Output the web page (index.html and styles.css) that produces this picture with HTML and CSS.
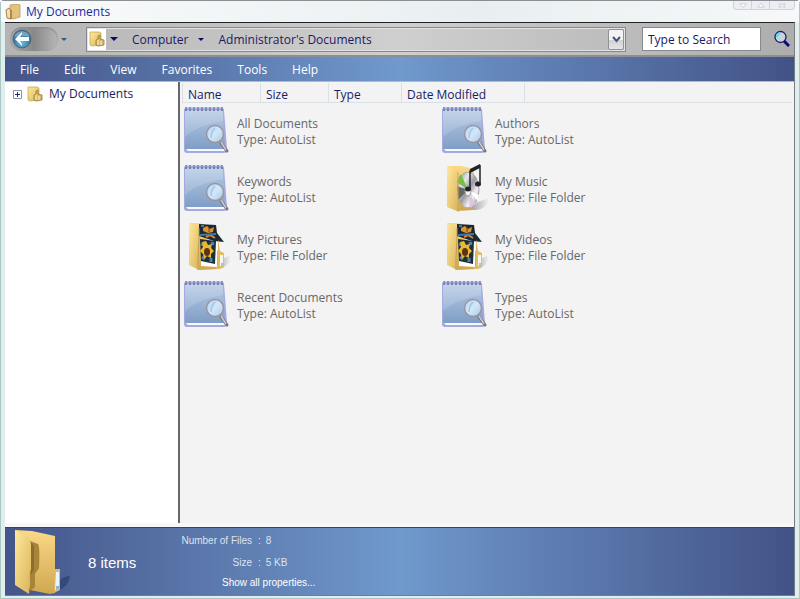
FILE: index.html
```html
<!DOCTYPE html>
<html lang="en">
<head>
  <meta charset="UTF-8">
  <meta name="viewport" content="width=device-width, initial-scale=1.0">
  <title>My Documents</title>
  <link rel="stylesheet" href="styles.css">
</head>
<body>
  <svg class="sprite" aria-hidden="true">
    <defs>
      <linearGradient id="gold" x1="0" y1="0" x2="1" y2="1">
        <stop offset="0" stop-color="#ffe99c"/>
        <stop offset="1" stop-color="#d9b45c"/>
      </linearGradient>
      <linearGradient id="gold-dark" x1="0" y1="0" x2="0" y2="1">
        <stop offset="0" stop-color="#fcd986"/>
        <stop offset="1" stop-color="#cfa750"/>
      </linearGradient>
      <linearGradient id="paper" x1="0" y1="0" x2="0" y2="1">
        <stop offset="0" stop-color="#b9cde6"/>
        <stop offset="0.5" stop-color="#9bb4d5"/>
        <stop offset="1" stop-color="#7f9dc6"/>
      </linearGradient>
      <linearGradient id="lens" x1="0" y1="0" x2="1" y2="1">
        <stop offset="0" stop-color="#b5d3ef"/>
        <stop offset="0.5" stop-color="#d3e6f8"/>
        <stop offset="1" stop-color="#a9c9ea"/>
      </linearGradient>
      <linearGradient id="shade" x1="0" y1="0" x2="1" y2="0">
        <stop offset="0" stop-color="#555" stop-opacity="0.6"/>
        <stop offset="1" stop-color="#555" stop-opacity="0"/>
      </linearGradient>
      <linearGradient id="disc" x1="0" y1="0" x2="1" y2="1">
        <stop offset="0" stop-color="#777"/>
        <stop offset="0.3" stop-color="#e8e8e8"/>
        <stop offset="0.5" stop-color="#9a9a9a"/>
        <stop offset="0.7" stop-color="#f4eef6"/>
        <stop offset="1" stop-color="#8c8c8c"/>
      </linearGradient>
      <radialGradient id="orb" cx="0.5" cy="0.7" r="0.6">
        <stop offset="0" stop-color="#6fb9d8"/>
        <stop offset="1" stop-color="#2c6590"/>
      </radialGradient>
    </defs>

    <symbol id="notebook" viewBox="0 0 48 48">
      <path d="M2 4q0-2 2-2h36q2 0 2 2l3 39q0 4-3 4H5q-3 0-3-3z" fill="#a4a9e2"/>
      <path d="M4 43h38l1 2H6z" fill="#f6f8fd"/>
      <path d="M3 4h38l2 39H3z" fill="url(#paper)"/>
      <path d="M3 5h38v10Q16 19 3 31z" fill="#fff" opacity="0.14"/>
      <path d="M4 1v4M8 1v4M12 1v4M16 1v4M20 1v4M24 1v4M28 1v4M32 1v4M36 1v4M40 1v4" stroke="#7780a6" stroke-width="2"/>
      <path d="M3 2h38" stroke="#a4a9e2" stroke-width="1"/>
      <path d="M39 37l6 8" stroke="#77777d" stroke-width="3" stroke-linecap="round"/>
      <path d="M39 36l5 8" stroke="#cfcac8" stroke-width="1.5"/>
      <circle cx="33" cy="28" r="8.5" fill="url(#lens)" stroke="#9696a0" stroke-width="1.5"/>
      <path d="M33 22q-4 4-4 10" stroke="#9fc6ec" stroke-width="1.5" fill="none"/>
    </symbol>

    <symbol id="pictures" viewBox="0 0 48 48">
      <path d="M40 37l9-4q0 9-9 13h-8z" fill="url(#shade)"/>
      <path d="M7 1h11l12 4v22l7 2 5 3v13l-5 2-20 1z" fill="url(#gold-dark)"/>
      <path d="M19 18l16-1v28l-16-1z" fill="#fff"/>
      <path d="M18 17l16 2-1 23-14-3z" fill="#20303b"/>
      <path d="M19 22l3 1M29 22l3-1M20 35l3 2M29 36v4" stroke="#4b86ae" stroke-width="3"/>
      <path d="M24 19l2 4 4-1-1 4 3 3-3 3v4l-4-2-3 3-1-5-3-3 3-4-1-5z" fill="#efb62f"/>
      <ellipse cx="25" cy="30" rx="3" ry="4" fill="#573416"/>
      <path d="M17 2l17 1 1 8 7 9-10-1-15-5z" fill="#192a35"/>
      <path d="M21 6l4-2 3 3 4-2-1 5-5 1-5-2z" fill="#df9324"/>
      <path d="M24 15l4-2 5 3" stroke="#d58937" stroke-width="2" fill="none"/>
      <path d="M18 13l16-1M19 4h3" stroke="#3d78aa" stroke-width="2"/>
      <path d="M27 5v5" stroke="#8e3021" stroke-width="1"/>
      <path d="M36 17v26l-3 4h5l4-2V31l-4-2z" fill="#e1bd69"/>
      <path d="M38 33h3v11h-3z" fill="#f6f8ed"/>
      <path d="M39 41h2v3h-2z" fill="#99c7ea"/>
      <path d="M7 1l10 5v42L7 43z" fill="url(#gold)"/>
      <path d="M17 6v12l-1 17v13" stroke="#c29c4b" stroke-width="1" fill="none"/>
    </symbol>

    <symbol id="music" viewBox="0 0 48 48">
      <path d="M38 38l11-4q-1 10-12 12h-9z" fill="url(#shade)"/>
      <path d="M7 2h14l13 3v41l-17 1z" fill="url(#gold-dark)"/>
      <ellipse cx="28" cy="26" rx="11" ry="18" fill="url(#disc)" stroke="#a8a8a8"/>
      <path d="M28 26L21 10q-3 3-4 8z" fill="#76be48"/>
      <path d="M28 26L18 36q-2-6-1-14z" fill="#666"/>
      <path d="M28 26l2 18 5-4z" fill="#ddc7de"/>
      <path d="M28 26l10 11 1-6z" fill="#fff"/>
      <ellipse cx="28" cy="27" rx="3" ry="5" fill="#f5f5f5" stroke="#999"/>
      <path d="M30 25V7l10-5v17" fill="none" stroke="#20232d" stroke-width="1.5"/>
      <path d="M30 5l10-5v4L30 9z" fill="#20232d"/>
      <ellipse cx="28" cy="25" rx="3" ry="2.5" fill="#20232d"/>
      <ellipse cx="38" cy="20" rx="3" ry="2.5" fill="#20232d"/>
      <path d="M7 2l10 5v12l1 15-1 13L7 43z" fill="url(#gold)"/>
      <path d="M18 8v40" stroke="#d0ab5b" stroke-width="1"/>
    </symbol>

    <symbol id="folder-large" viewBox="0 0 60 66">
      <path d="M44 54q7-8 13-7-1 11-13 15z" fill="#1d2d5d" opacity="0.45"/>
      <path d="M2 1l17 1 23 5v57l-5 1-20-4z" fill="url(#gold-dark)"/>
      <path d="M17 12l8 3q2 2 1 24l-4 6v13l-5 4z" fill="#a98438"/>
      <path d="M18 13l3 4v24l-3 5z" fill="#8b6d2d"/>
      <path d="M2 1l13 9q3 2 3 6v24l-3 7 2 5-1 13L2 56z" fill="url(#gold)"/>
      <path d="M42 40h5v21l-6 3z" fill="#dfb965"/>
      <path d="M43 43h3v17l-4 1z" fill="#e9f5fa"/>
      <path d="M43 57h3v3l-3 1z" fill="#80b9e8"/>
    </symbol>

    <symbol id="folder-open" viewBox="0 0 16 16">
      <path d="M5 1l8-1 2 1v12l-7 2-3-1z" fill="#e3c47c" stroke="#b1904f" stroke-width="0.7"/>
      <path d="M1 6l3-2 2 3v8l-4-1z" fill="#f2deb1" stroke="#a78348"/>
      <path d="M6 6v9" stroke="#8b6b35"/>
    </symbol>

    <symbol id="folder-small" viewBox="0 0 16 16">
      <path d="M1 1h9l2 1v12l-9 1-2-1z" fill="url(#gold)" stroke="#c39d50" stroke-width="0.7"/>
      <path d="M7 9l2-1V5l2-1v4l4 1v5l-6 1-2-1z" fill="#dbb766" stroke="#9b7933" stroke-width="0.8"/>
      <path d="M9 9v5" stroke="#fff3c4"/>
      <path d="M12 10v4" stroke="#e5f2fb"/>
    </symbol>
  </svg>

  <div class="window">
    <header class="titlebar">
      <svg class="icon"><use href="#folder-open"/></svg>
      <h1>My Documents</h1>
      <div class="window-buttons">
        <button type="button" aria-label="Minimize"><svg viewBox="0 0 10 6"><path d="M1 1h8L6 5H4z"/></svg></button>
        <button type="button" aria-label="Maximize"><svg viewBox="0 0 10 6"><path d="M1 5h8L6 1H4z"/></svg></button>
        <button type="button" class="close" aria-label="Close"><svg viewBox="0 0 10 6"><path d="M1 1h2l2 1 2-1h2L7 3l2 2H7L5 4 3 5H1l2-2z"/></svg></button>
      </div>
    </header>

    <div class="frame">
      <div class="toolbar">
        <button type="button" class="back" aria-label="Back">
          <svg viewBox="0 0 20 20">
            <circle cx="10" cy="10" r="9" fill="url(#orb)" stroke="#45677f"/>
            <path d="M2 8q2-6 8-6t8 6q-8-3-16 0z" fill="#fff" opacity="0.35"/>
            <path d="M3 10l7-7v2l-2 3h9v4H8l2 3v2z" fill="#f8fdff"/>
          </svg>
        </button>
        <button type="button" class="arrow history" aria-label="Recent pages"></button>
        <div class="address">
          <span class="address-icon"><svg class="icon"><use href="#folder-small"/></svg></span>
          <button type="button" class="arrow large" aria-label="Locations"></button>
          <a href="#">Computer</a>
          <button type="button" class="arrow" aria-label="Computer folders"></button>
          <a href="#">Administrator's Documents</a>
          <button type="button" class="drop" aria-label="Previous locations">
            <svg viewBox="0 0 9 7"><path d="M1 1l3.5 4L8 1" fill="none" stroke="#42557d" stroke-width="2"/></svg>
          </button>
        </div>
        <input type="text" class="search" placeholder="Type to Search" aria-label="Search">
        <button type="button" class="go" aria-label="Search now">
          <svg viewBox="0 0 16 18">
            <circle cx="6.5" cy="7" r="5.5" fill="#c9d3dc" stroke="#1b2068" stroke-width="1.3"/>
            <path d="M3 7q0-3 3-4" fill="none" stroke="#3be6f4" stroke-width="2"/>
            <path d="M10 11l5 5" stroke="#08087e" stroke-width="3"/>
          </svg>
        </button>
      </div>

      <nav class="menu">
        <a href="#">File</a>
        <a href="#">Edit</a>
        <a href="#">View</a>
        <a href="#">Favorites</a>
        <a href="#">Tools</a>
        <a href="#">Help</a>
      </nav>

      <div class="content">
        <aside class="tree">
          <button type="button" class="expand" aria-label="Expand My Documents">
            <svg viewBox="0 0 9 9"><path d="M0.5 0.5h8v8h-8z" fill="#fff" stroke="#8793a1"/><path d="M2 4.5h5M4.5 2v5" stroke="#252569"/></svg>
          </button>
          <svg class="icon"><use href="#folder-small"/></svg>
          <a href="#">My Documents</a>
        </aside>

        <main class="files">
          <div class="columns">
            <button type="button" class="col-name">Name</button>
            <button type="button" class="col-size">Size</button>
            <button type="button" class="col-type">Type</button>
            <button type="button" class="col-date">Date Modified</button>
          </div>
          <ul class="tiles">
            <li><svg><use href="#notebook"/></svg><p>All Documents<br>Type: AutoList</p></li>
            <li><svg><use href="#notebook"/></svg><p>Authors<br>Type: AutoList</p></li>
            <li><svg><use href="#notebook"/></svg><p>Keywords<br>Type: AutoList</p></li>
            <li><svg><use href="#music"/></svg><p>My Music<br>Type: File Folder</p></li>
            <li><svg><use href="#pictures"/></svg><p>My Pictures<br>Type: File Folder</p></li>
            <li><svg><use href="#pictures"/></svg><p>My Videos<br>Type: File Folder</p></li>
            <li><svg><use href="#notebook"/></svg><p>Recent Documents<br>Type: AutoList</p></li>
            <li><svg><use href="#notebook"/></svg><p>Types<br>Type: AutoList</p></li>
          </ul>
        </main>
      </div>

      <footer class="details">
        <svg class="details-icon"><use href="#folder-large"/></svg>
        <strong>8 items</strong>
        <div class="properties">
          <dl>
            <dt>Number of Files</dt><dd>8</dd>
            <dt>Size</dt><dd>5 KB</dd>
          </dl>
          <a href="#">Show all properties...</a>
        </div>
      </footer>
    </div>
  </div>
</body>
</html>
```

FILE: styles.css
```css
* {
  box-sizing: border-box;
}

body {
  margin: 0;
  font-family: "Open Sans", "Noto Sans", sans-serif;
  font-size: 12px;
  line-height: 16px;
  color: #1a1a66;
}

button {
  padding: 0;
  border: 0;
  background: none;
  font: inherit;
  color: inherit;
}

a {
  color: inherit;
  text-decoration: none;
}

.sprite {
  display: block;
  width: 0;
  height: 0;
}

.icon {
  width: 16px;
  height: 16px;
  flex: none;
}

.window {
  display: flex;
  flex-direction: column;
  height: 100vh;
  padding: 0 4px 2px;
  border: 1px solid #a9c8c5;
  border-top-color: #8c8f91;
  border-radius: 4px 4px 0 0;
  background: #e2eeed;
}

/* title bar */
.titlebar {
  display: flex;
  align-items: center;
  height: 21px;
  margin: 0 -4px;
  padding: 0 4px;
  background: linear-gradient(90deg, #fafbfc, #e9eff1 60%, #f6f8f9);
}

.titlebar h1 {
  flex: 1;
  margin: 0 0 0 5px;
  font-size: 12px;
  font-weight: normal;
  color: #1c2ba0;
}

.window-buttons {
  display: flex;
  align-self: flex-start;
  border: 1px solid #d0d1dc;
  border-top: 0;
  border-radius: 0 0 4px 4px;
  background: #edeef4;
}

.window-buttons button {
  display: flex;
  align-items: center;
  justify-content: center;
  width: 18px;
  height: 8px;
  border-right: 1px solid #d0d1dc;
}

.window-buttons .close {
  width: 24px;
  border-right: 0;
}

.window-buttons svg {
  width: 8px;
  height: 5px;
  fill: #fff;
  stroke: #c4c5cb;
}

.frame {
  flex: 1;
  display: flex;
  flex-direction: column;
  min-height: 0;
  border: 1px solid #777d80;
  border-top-color: #222;
  border-left: 0;
}

/* address bar */
.toolbar {
  display: flex;
  align-items: center;
  height: 34px;
  padding: 0 4px 0 5px;
  border-bottom: 2px solid #8b8e94;
  background: linear-gradient(90deg, #b4b4b4, #cfcfcf 50%, #adadad);
}

.back {
  width: 48px;
  height: 24px;
  padding: 1px 2px;
  border-radius: 12px;
  background: linear-gradient(90deg, #aaa, #888 50%, #b8b8b8);
  box-shadow: inset 0 1px 2px #888;
  text-align: left;
}

.back svg {
  display: block;
  width: 20px;
  height: 20px;
}

.arrow {
  width: 8px;
  height: 16px;
}

.arrow::before {
  content: "";
  display: block;
  width: 0;
  margin: 0 auto;
  border: 3px solid transparent;
  border-top-color: #0a0a62;
  border-bottom: 0;
}

.arrow.large::before {
  border-width: 4px 4px 0;
}

.arrow.history {
  margin: 0 18px 0 2px;
}

.arrow.history::before {
  border-top-color: #2d5a80;
}

.address {
  flex: 1;
  display: flex;
  align-items: center;
  height: 25px;
  border: 1px solid #85898f;
  outline: 1px solid #e3e3e3;
  outline-offset: -2px;
}

.address-icon {
  display: flex;
  align-items: center;
  align-self: stretch;
  margin-right: 4px;
  padding: 0 1px 0 2px;
  background: #fff;
}

.address a {
  margin: 0 8px 0 14px;
  padding-top: 1px;
}

.drop {
  display: flex;
  align-items: center;
  justify-content: center;
  width: 16px;
  height: 21px;
  margin: 0 1px 0 auto;
  border: 1px solid #8e9298;
  border-radius: 2px;
  background: linear-gradient(#f3f3f3 50%, #cfd0d2 50%, #e4e4e4);
}

.drop svg {
  width: 9px;
  height: 7px;
}

.search {
  width: 119px;
  height: 24px;
  margin: 0 13px 0 16px;
  padding: 0 5px;
  border: 1px solid #85898f;
  border-radius: 0;
  background: #fff;
  font: inherit;
  color: inherit;
}

.search::placeholder {
  color: #1a1a66;
}

.go svg {
  display: block;
  width: 16px;
  height: 18px;
}

/* menu bar */
.menu {
  display: flex;
  align-items: center;
  gap: 25px;
  height: 25px;
  padding: 2px 15px 0;
  border-bottom: 1px solid #a9bade;
  background: linear-gradient(90deg, #45558a, #7099cc 50%, #425287);
  color: #fff;
}

/* main area */
.content {
  flex: 1;
  display: flex;
  min-height: 0;
  border-bottom: 4px solid #f8f8f8;
}

.tree {
  display: flex;
  align-items: flex-start;
  width: 175px;
  padding: 4px 8px;
  border-right: 2px solid #66686b;
  background: #fff;
}

.expand {
  display: flex;
  height: 16px;
  align-items: center;
  margin-right: 5px;
}

.expand svg {
  width: 9px;
  height: 9px;
}

.tree a {
  margin-left: 6px;
}

.files {
  flex: 1;
  padding: 1px 2px;
  background: #f3f3f3;
}

.columns {
  display: flex;
  height: 20px;
  border-bottom: 1px solid #d9e0e6;
  border-left: 1px solid #d9e0e6;
}

.columns button {
  padding: 4px 5px 0;
  border-right: 1px solid #d9e0e6;
  text-align: left;
}

.columns .col-name {
  width: 78px;
}

.columns .col-size {
  width: 68px;
}

.columns .col-type {
  width: 73px;
}

.columns .col-date {
  width: 123px;
}

.tiles {
  display: grid;
  grid-template-columns: repeat(auto-fill, 248px);
  grid-auto-rows: 48px;
  gap: 10px;
  margin: 0;
  padding: 3px 0 0;
  list-style: none;
  color: #686868;
}

.tiles li {
  display: flex;
  align-items: center;
  gap: 7px;
}

.tiles svg {
  width: 48px;
  height: 48px;
}

.tiles p {
  margin: 0;
  padding-top: 4px;
}

/* details bar */
.details {
  display: flex;
  align-items: center;
  height: 68px;
  padding: 0 8px;
  border-top: 1px solid #444;
  background: linear-gradient(90deg, #45558a, #7099cc 50%, #425287);
  color: #fff;
  font-family: "Liberation Sans", Arial, sans-serif;
}

.details-icon {
  width: 60px;
  height: 66px;
}

.details strong {
  width: 98px;
  margin-left: 15px;
  padding-top: 2px;
  font-size: 15px;
  font-weight: normal;
}

.properties {
  font-size: 10px;
}

.properties dl {
  display: grid;
  grid-template-columns: 66px auto;
  row-gap: 6px;
  margin: 0 0 4px;
  color: #dbe3f0;
}

.properties dt {
  justify-self: end;
  white-space: nowrap;
}

.properties dd {
  margin: 0;
}

.properties dd::before {
  content: ":";
  margin: 0 5px 0 6px;
}

.properties a {
  margin-left: 36px;
}
```
